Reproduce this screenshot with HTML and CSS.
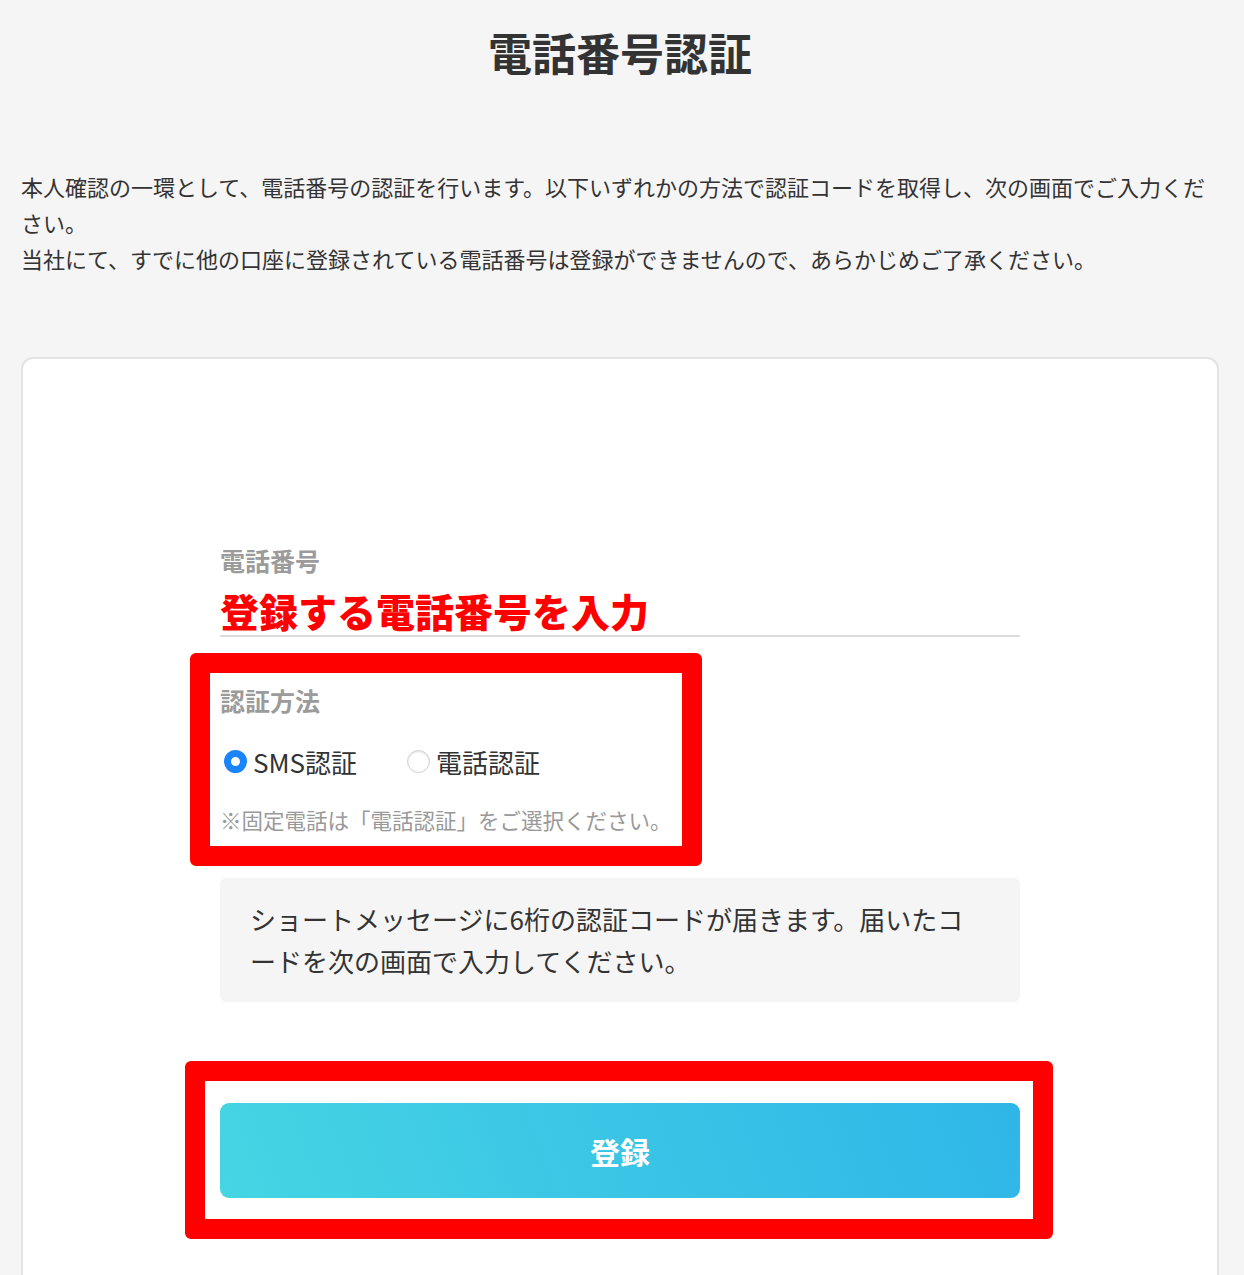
FILE: index.html
```html
<!DOCTYPE html>
<html lang="ja">
<head>
    <meta charset="UTF-8">
    <meta name="viewport" content="width=device-width, initial-scale=1.0">
    <title>電話番号認証</title>
    <link rel="stylesheet" href="styles.css">
</head>
<body>
    <div class="page">
        <h1 class="page-title">電話番号認証</h1>
        <div class="lead">
            <p>本人確認の一環として、電話番号の認証を行います。以下いずれかの方法で認証コードを取得し、次の画面でご入力ください。</p>
            <p>当社にて、すでに他の口座に登録されている電話番号は登録ができませんので、あらかじめご了承ください。</p>
        </div>

        <div class="card">
            <form class="form">
                <div class="field">
                    <label class="field-label" for="tel">電話番号</label>
                    <div class="phone-input" id="tel">
                        <span class="hint-red">登録する電話番号を入力</span>
                    </div>
                </div>

                <!-- 赤枠: 認証方法 -->
                <div class="mark mark-method">
                    <p class="field-label">認証方法</p>
                    <div class="radios">
                        <label class="radio"><input type="radio" name="method" checked><span>SMS認証</span></label>
                        <label class="radio"><input type="radio" name="method"><span>電話認証</span></label>
                    </div>
                    <p class="note">※固定電話は「電話認証」をご選択ください。</p>
                </div>

                <div class="info">
                    ショートメッセージに6桁の認証コードが届きます。届いたコードを次の画面で入力してください。
                </div>

                <!-- 赤枠: 登録ボタン -->
                <div class="mark mark-submit">
                    <button type="button" class="submit">登録</button>
                </div>
            </form>
        </div>
    </div>
</body>
</html>
```

FILE: styles.css
```css
body {
    font-family: "Noto Sans CJK JP", "Noto Sans", sans-serif;
    background-color: #f5f5f5;
    color: #333;
    margin: 0;
    padding: 0;
}
.page {
    width: 1198px;
    margin-left: 21px;
}
.page-title {
    margin: 0;
    padding-top: 28px;
    font-size: 44px;
    line-height: 48px;
    font-weight: 700;
    text-align: center;
    color: #333;
}
.lead {
    margin-top: 92px;
    font-size: 22px;
    line-height: 36px;
    color: #333;
}
.lead p {
    margin: 0;
}
.card {
    margin-top: 81px;
    background: #fff;
    border: 2px solid #e3e3e3;
    border-radius: 12px;
    height: 930px;
}
.form {
    width: 800px;
    margin: 0 auto;
    padding-top: 185px;
}
.field-label {
    display: block;
    margin: 0;
    font-size: 25px;
    line-height: 32px;
    font-weight: 700;
    color: #9b9b9b;
}
.phone-input {
    margin-top: 9px;
    height: 50px;
    line-height: 50px;
    border-bottom: 2px solid #dcdcdc;
}
.hint-red {
    color: #ff0000;
    font-size: 39px;
    font-weight: 900;
}
.mark {
    border: 20px solid #ff0000;
    border-radius: 6px;
    background: #fff;
}
.mark-method {
    width: 462px;
    margin: 16px 0 0 -30px;
    padding: 11px 0 11px 10px;
}
.radios {
    display: flex;
    gap: 50px;
    margin-top: 28px;
    height: 34px;
    align-items: center;
}
.radio {
    display: flex;
    align-items: center;
    gap: 6px;
    font-size: 26px;
    color: #333;
}
.radio:first-child {
    margin-left: 4px;
}
.radio input {
    appearance: none;
    -webkit-appearance: none;
    margin: 0;
    width: 23px;
    height: 23px;
    border-radius: 50%;
    border: 1px solid #cfcfcf;
    background: #fff;
    box-shadow: inset 0 1px 2px rgba(0, 0, 0, 0.12);
}
.radio input:checked {
    border: 7px solid #1a84fa;
    box-shadow: none;
}
.note {
    margin: 27px 0 0;
    font-size: 21.5px;
    line-height: 30px;
    color: #999;
    white-space: nowrap;
}
.info {
    margin-top: 12px;
    background: #f5f5f5;
    border-radius: 6px;
    padding: 20px 36px 20px 30px;
    font-size: 26px;
    line-height: 42px;
    color: #333;
}
.mark-submit {
    margin: 59px -33px 0 -35px;
    padding: 22px 13px 21px 15px;
}
.submit {
    display: block;
    width: 100%;
    height: 95px;
    border: none;
    border-radius: 9px;
    background: linear-gradient(70deg, #45d5e3 0%, #3ac5e6 50%, #2fb6e8 100%);
    color: #fff;
    font-family: inherit;
    font-size: 30px;
    font-weight: 700;
    cursor: pointer;
}
```
